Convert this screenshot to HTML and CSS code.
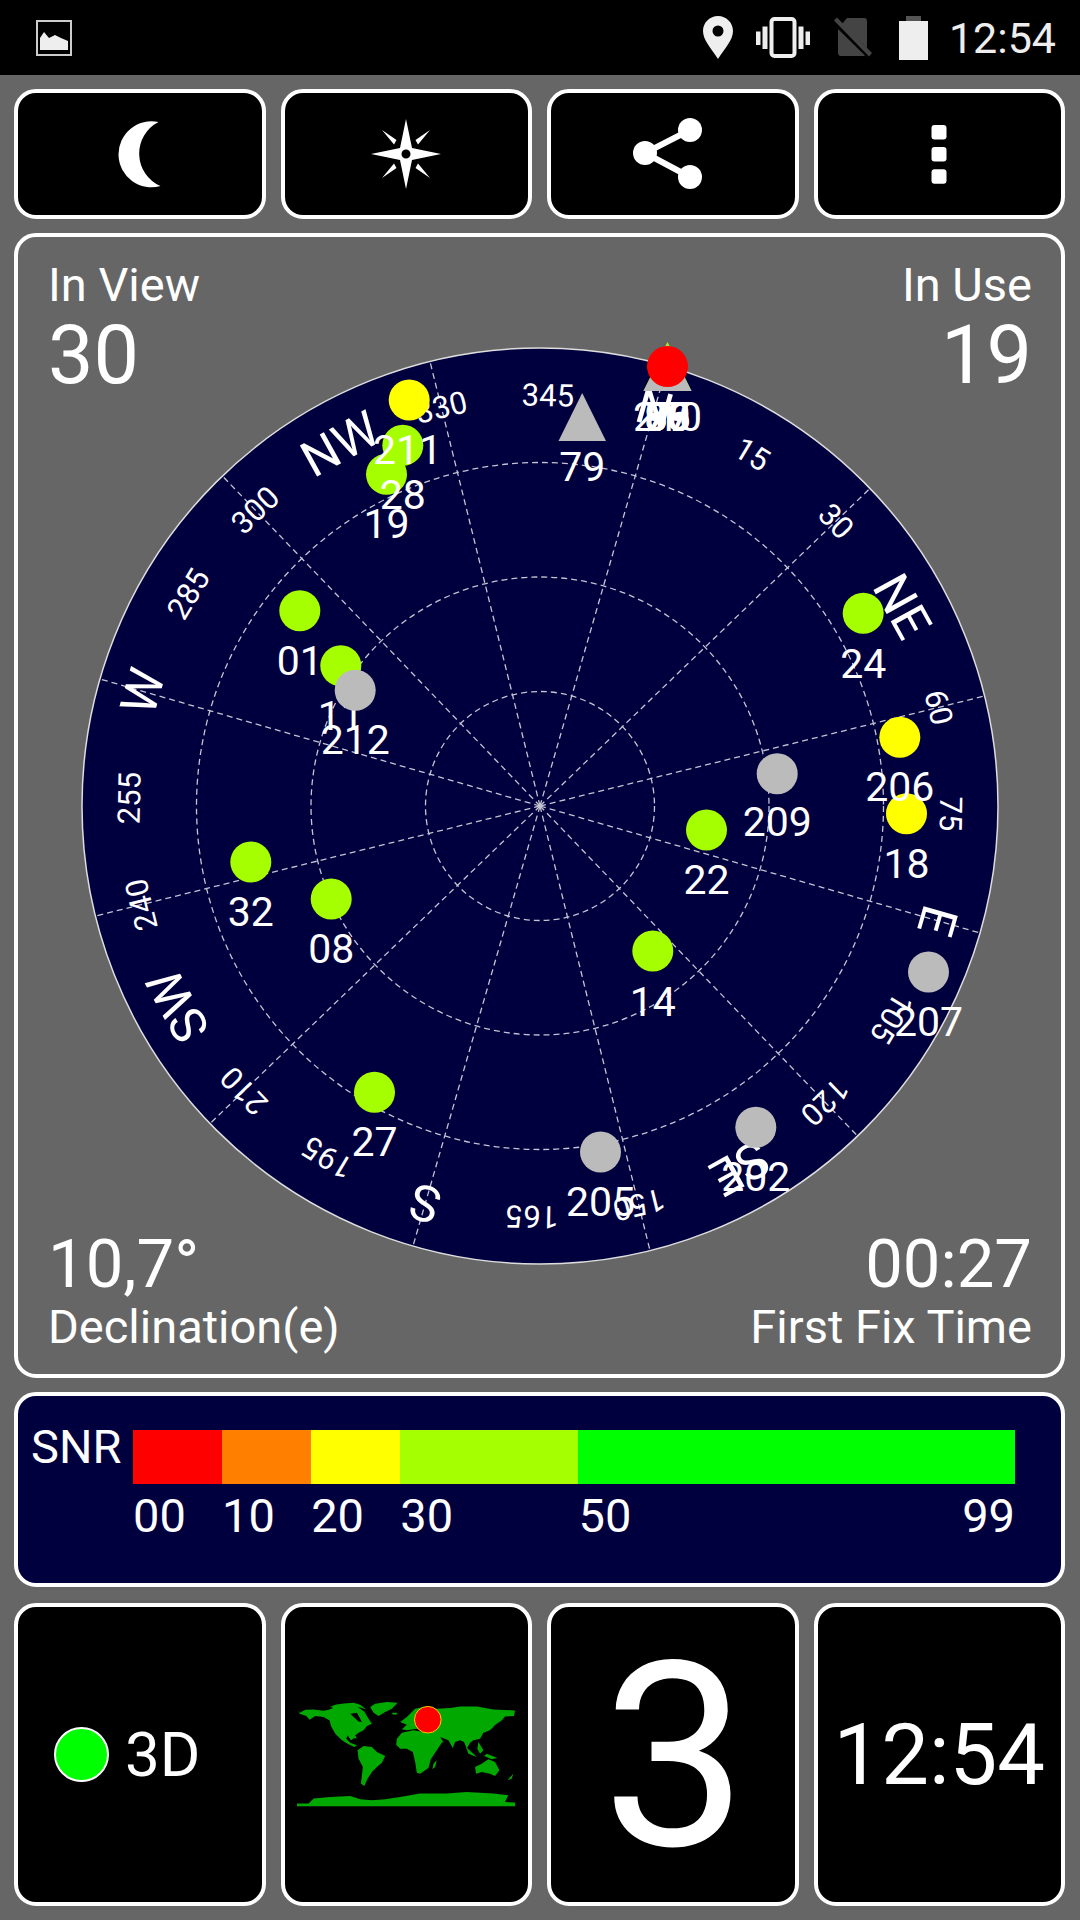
FILE: index.html
```html
<!DOCTYPE html>
<html lang="en">
<head>
  <meta charset="UTF-8" />
  <title>GPS Test</title>
  <meta name="viewport" content="width=device-width, initial-scale=1" />
  <link rel="stylesheet" href="styles.css">
</head>
<body>
  <header class="status-bar">
    <svg class="icon-image" width="36" height="36" viewBox="0 0 36 36">
      <rect x="1" y="1" width="34" height="34" class="outline"/>
      <path class="light" d="M4 30V18l4-6 5 6 6-3 6 3 7 3v9z"/>
    </svg>
    <div class="status-icons">
      <svg width="30" height="43" viewBox="0 0 30 43">
        <path class="light" fill-rule="evenodd" d="M15 0C6.7 0 0 6.7 0 15c0 9 8 17 15 28 7-11 15-19 15-28C30 6.7 23.300 0 15 0zm0 9.500a5.500 5.500 0 1 1 0 11 5.500 5.500 0 0 1 0-11z"/>
      </svg>
      <svg width="54" height="41" viewBox="0 0 54 41">
        <rect class="phone" x="15.500" y="2" width="23" height="37" rx="3"/>
        <path class="light" d="M6.500 9.500h5V32h-5zM0 14.500h4.500V28H0zM42.500 9.500h5V32h-5zM49.500 14.500H54V28h-4.500z"/>
      </svg>
      <svg class="icon-sim" width="39" height="41" viewBox="0 0 39 41">
        <path class="dim" d="M14 1h17a3 3 0 0 1 3 3v27L9 7zM5 12l27 26.500a3 3 0 0 1-1 .5H8a3 3 0 0 1-3-3z"/>
        <path class="dim" d="M1 3.500l3-3 35 35.500-3 3.500z"/>
      </svg>
      <svg class="icon-battery" width="29" height="44" viewBox="0 0 29 44">
        <path class="cap" d="M7 0h15v5H7z"/>
        <path class="light" d="M0 5h29v39H0z"/>
      </svg>
      <span class="status-time">12:54</span>
    </div>
  </header>

  <main class="screen">
    <nav class="button-row tool-row">
      <button class="cell">
        <svg width="80" height="80" viewBox="-40 -40 80 80">
          <path d="M18.500-32A33 33 0 1 0 20.500 32 35.400 35.400 0 0 1 18.500-32z"/>
        </svg>
      </button>
      <button class="cell">
        <svg width="80" height="80" viewBox="-40 -40 80 80">
          <path fill-rule="evenodd" d="M0-35L6-6 35 0 6 6 0 35-6 6-35 0-6-6zM0-4.500a4.500 4.500 0 1 0 0 9 4.500 4.500 0 0 0 0-9z"/>
          <path d="M-24-24L-9.500-14-12-9.500zM24-24L9.500-14 12-9.500zM-24 24L-9.500 14-12 9.500zM24 24L9.500 14 12 9.500z"/>
        </svg>
      </button>
      <button class="cell">
        <svg width="80" height="80" viewBox="-40 -40 80 80">
          <circle cx="17" cy="-24" r="12"/>
          <circle cx="-28" cy="-1" r="12"/>
          <circle cx="17" cy="23" r="12"/>
          <path class="share-line" d="M17-24L-28-1 17 23"/>
        </svg>
      </button>
      <button class="cell">
        <svg width="80" height="80" viewBox="-40 -40 80 80">
          <rect x="-7.500" y="-29" width="15" height="14.500" rx="3"/>
          <rect x="-7.500" y="-7" width="15" height="14.500" rx="3"/>
          <rect x="-7.500" y="15.300" width="15" height="14.500" rx="3"/>
        </svg>
      </button>
    </nav>

    <section class="sky-panel">
      <svg class="sky-plot" width="920" height="920" viewBox="79.5 345 920 920">
        <circle class="sky-disc" cx="539.5" cy="805" r="458"/>
        <g transform="translate(539.5 805)">
          <g class="grid">
            <circle r="114.500"/>
            <circle r="229"/>
            <circle r="343.500"/>
            <path d="M0 0V-458" transform="rotate(16.1)"/>
            <path d="M0 0V-458" transform="rotate(46.1)"/>
            <path d="M0 0V-458" transform="rotate(76.1)"/>
            <path d="M0 0V-458" transform="rotate(106.1)"/>
            <path d="M0 0V-458" transform="rotate(136.1)"/>
            <path d="M0 0V-458" transform="rotate(166.1)"/>
            <path d="M0 0V-458" transform="rotate(196.1)"/>
            <path d="M0 0V-458" transform="rotate(226.1)"/>
            <path d="M0 0V-458" transform="rotate(256.1)"/>
            <path d="M0 0V-458" transform="rotate(286.1)"/>
            <path d="M0 0V-458" transform="rotate(316.1)"/>
            <path d="M0 0V-458" transform="rotate(346.1)"/>
          </g>
          <g class="degrees">
            <text transform="rotate(31.1) translate(0 -411)" dy=".355em">15</text>
            <text transform="rotate(46.1) translate(0 -411)" dy=".355em">30</text>
            <text transform="rotate(76.1) translate(0 -411)" dy=".355em">60</text>
            <text transform="rotate(91.1) translate(0 -411)" dy=".355em">75</text>
            <text transform="rotate(121.1) translate(0 -411)" dy=".355em">105</text>
            <text transform="rotate(136.1) translate(0 -411)" dy=".355em">120</text>
            <text transform="rotate(166.1) translate(0 -411)" dy=".355em">150</text>
            <text transform="rotate(181.1) translate(0 -411)" dy=".355em">165</text>
            <text transform="rotate(211.1) translate(0 -411)" dy=".355em">195</text>
            <text transform="rotate(226.1) translate(0 -411)" dy=".355em">210</text>
            <text transform="rotate(256.1) translate(0 -411)" dy=".355em">240</text>
            <text transform="rotate(271.1) translate(0 -411)" dy=".355em">255</text>
            <text transform="rotate(301.1) translate(0 -411)" dy=".355em">285</text>
            <text transform="rotate(316.1) translate(0 -411)" dy=".355em">300</text>
            <text transform="rotate(346.1) translate(0 -411)" dy=".355em">330</text>
            <text transform="rotate(361.1) translate(0 -411)" dy=".355em">345</text>
          </g>
          <g class="compass">
            <text transform="rotate(16.1) translate(0 -414)" dy=".355em">N</text>
            <text transform="rotate(61.1) translate(0 -414)" dy=".355em">NE</text>
            <text transform="rotate(106.1) translate(0 -414)" dy=".355em">E</text>
            <text transform="rotate(151.1) translate(0 -414)" dy=".355em">SE</text>
            <text transform="rotate(196.1) translate(0 -414)" dy=".355em">S</text>
            <text transform="rotate(241.1) translate(0 -414)" dy=".355em">SW</text>
            <text transform="rotate(286.1) translate(0 -414)" dy=".355em">W</text>
            <text transform="rotate(331.1) translate(0 -414)" dy=".355em">NW</text>
          </g>
        </g>

        <!-- satellites on the horizon, all piled up at north -->
        <polygon class="sat-mid" points="667,341 691,390 643,390"/>
        <polygon class="sat-idle" points="667,343 691,390 643,390"/>
        <circle class="sat-red" cx="667" cy="365.500" r="20.500"/>
        <g class="sat-labels">
          <text x="667" y="430">210</text>
          <text x="667" y="430">69</text>
          <text x="667" y="430">70</text>
          <text x="667" y="430">77</text>
          <text x="667" y="430">78</text>
          <text x="667" y="430">85</text>
          <text x="667" y="430">86</text>
          <text x="667" y="430">87</text>
          <text x="667" y="430">93</text>
          <text x="667" y="430">68</text>
        </g>

        <polygon class="sat-idle" points="581.7,392 605.5,440 558,440"/>
        <text class="sat-label" x="581.7" y="480">79</text>

        <circle class="sat-yellow" cx="408.700" cy="399" r="20.500"/>
        <circle class="sat-mid" cx="402.300" cy="444.300" r="20.500"/>
        <circle class="sat-mid" cx="386" cy="473.300" r="20.500"/>
        <text class="sat-label" x="407" y="463">211</text>
        <text class="sat-label" x="402.300" y="508.300">28</text>
        <text class="sat-label" x="386" y="537">19</text>

        <circle class="sat-mid" cx="299.300" cy="609.700" r="20.500"/>
        <text class="sat-label" x="299.300" y="673.500">01</text>
        <circle class="sat-mid" cx="340.300" cy="664.700" r="20.500"/>
        <text class="sat-label" x="340.300" y="728.700">11</text>
        <circle class="sat-idle" cx="354.700" cy="689.300" r="20.500"/>
        <text class="sat-label" x="354.700" y="753">212</text>

        <circle class="sat-mid" cx="862.700" cy="612.300" r="20.500"/>
        <text class="sat-label" x="862.700" y="676.500">24</text>
        <circle class="sat-yellow" cx="906" cy="812.700" r="20.500"/>
        <text class="sat-label" x="906" y="876.700">18</text>
        <circle class="sat-yellow" cx="899.300" cy="736.300" r="20.500"/>
        <text class="sat-label" x="899.300" y="800">206</text>
        <circle class="sat-idle" cx="776.700" cy="772.700" r="20.500"/>
        <text class="sat-label" x="776.700" y="835">209</text>
        <circle class="sat-mid" cx="706" cy="829" r="20.500"/>
        <text class="sat-label" x="706" y="893">22</text>
        <circle class="sat-mid" cx="652.300" cy="950" r="20.500"/>
        <text class="sat-label" x="652.300" y="1015">14</text>
        <circle class="sat-idle" cx="928" cy="971" r="20.500"/>
        <text class="sat-label" x="928" y="1035">207</text>
        <circle class="sat-idle" cx="755.300" cy="1126.300" r="20.500"/>
        <text class="sat-label" x="755.300" y="1190">202</text>
        <circle class="sat-idle" cx="600" cy="1151" r="20.500"/>
        <text class="sat-label" x="600" y="1215">205</text>

        <circle class="sat-mid" cx="250.300" cy="861" r="20.500"/>
        <text class="sat-label" x="250.300" y="925">32</text>
        <circle class="sat-mid" cx="330.700" cy="898" r="20.500"/>
        <text class="sat-label" x="330.700" y="962">08</text>
        <circle class="sat-mid" cx="374" cy="1091.300" r="20.500"/>
        <text class="sat-label" x="374" y="1155">27</text>
      </svg>

      <div class="readouts">
        <div class="readout-row top">
          <div>
            <div class="readout-label">In View</div>
            <div class="readout-big">30</div>
          </div>
          <div class="right">
            <div class="readout-label">In Use</div>
            <div class="readout-big">19</div>
          </div>
        </div>
        <div class="readout-row bottom">
          <div>
            <div class="readout-value">10,7°</div>
            <div class="readout-label">Declination(e)</div>
          </div>
          <div class="right">
            <div class="readout-value">00:27</div>
            <div class="readout-label">First Fix Time</div>
          </div>
        </div>
      </div>
    </section>

    <section class="snr-panel">
      <div class="snr-label">SNR</div>
      <div class="snr-chart">
        <div class="snr-bar">
          <div class="seg seg-10 red"></div>
          <div class="seg seg-10 orange"></div>
          <div class="seg seg-10 yellow"></div>
          <div class="seg seg-20 lime"></div>
          <div class="seg seg-49 green"></div>
        </div>
        <div class="snr-scale">
          <div class="seg seg-10">00</div>
          <div class="seg seg-10">10</div>
          <div class="seg seg-10">20</div>
          <div class="seg seg-20">30</div>
          <div class="seg seg-49 scale-end"><span>50</span><span>99</span></div>
        </div>
      </div>
    </section>

    <section class="button-row info-row">
      <div class="cell fix-cell">
        <span class="fix-dot"></span>
        <span class="fix-text">3D</span>
      </div>
      <div class="cell">
        <svg class="world" width="218" height="105" viewBox="110 190 655 315">
          <g class="land">
            <polygon points="112,212 118,222 135,213 160,212 190,216 205,213 230,203 258,198 285,200 300,210 312,218 325,240 335,255 320,262 310,275 295,282 285,290 290,300 283,298 272,305 262,290 258,300 270,312 290,320 282,325 262,315 245,305 225,285 212,262 208,245 190,235 165,232 148,243 138,232 118,225"/>
            <polygon points="210,204 225,198 250,194 280,192 300,198 318,212 300,206 275,204 245,208 225,210"/>
            <polygon points="330,205 345,195 380,190 412,192 395,210 375,220 355,232 340,222"/>
            <polygon points="395,222 412,222 408,228 398,227"/>
            <polygon points="292,335 310,322 335,325 350,340 375,352 365,372 350,385 335,400 322,420 312,442 302,435 305,410 308,385 295,360"/>
            <polygon points="410,300 425,282 460,275 490,280 510,285 525,305 545,312 530,335 512,362 505,388 480,405 470,402 465,370 458,340 440,330 420,330 408,318"/>
            <polygon points="520,375 530,365 525,385 517,392"/>
            <polygon points="420,250 440,235 465,210 490,205 530,210 570,208 600,203 650,203 700,212 765,215 762,232 735,233 725,245 700,262 690,275 670,282 660,300 640,305 630,312 620,330 612,310 600,305 585,310 578,328 565,305 540,295 550,310 525,320 512,290 490,275 470,270 440,275 425,272 440,258"/>
            <polygon points="700,240 708,255 695,270 690,268"/>
            <polygon points="618,325 640,345 650,355 625,345"/>
            <polygon points="655,310 670,335 660,345 652,330"/>
            <polygon points="680,345 712,358 695,362 672,352"/>
            <polygon points="645,385 665,375 685,362 705,370 718,395 705,412 690,405 665,400 648,405"/>
            <polygon points="742,425 760,405 755,420"/>
            <polygon points="110,495 145,495 160,480 210,475 270,472 300,482 335,485 375,482 420,475 480,465 560,465 620,460 700,465 745,470 735,490 765,492 765,503 110,503"/>
          </g>
          <polygon class="bay" points="270,225 290,222 300,240 305,250 295,248 280,235"/>
          <circle class="marker" cx="503" cy="243" r="40"/>
        </svg>
      </div>
      <div class="cell big-digit">3</div>
      <div class="cell clock">12:54</div>
    </section>
  </main>
</body>
</html>
```

FILE: styles.css
```css
* {
  box-sizing: border-box;
}
body {
  margin: 0;
  width: 1080px;
  height: 1920px;
  overflow: hidden;
  background: #666;
  color: #fff;
  font-family: Roboto, "Liberation Sans", sans-serif;
}

/* status bar */
.status-bar {
  height: 75px;
  background: #000;
  display: flex;
  align-items: center;
  justify-content: space-between;
  padding: 0 24px 0 36px;
}
.icon-image {
  margin-top: 1px;
}
.outline {
  fill: none;
  stroke: #ccc;
  stroke-width: 2;
}
.status-icons {
  display: flex;
  align-items: center;
  gap: 23px;
}
.icon-battery {
  margin-left: 4px;
}
.light {
  fill: #eee;
}
.dim {
  fill: #444;
}
.cap {
  fill: #555;
}
.phone {
  fill: none;
  stroke: #eee;
  stroke-width: 4;
}
.status-time {
  margin-left: -2px;
  font-size: 43px;
  color: #eee;
}

/* layout */
.screen {
  display: flex;
  flex-direction: column;
  gap: 14px;
  padding: 14px 15px 0 14px;
}
.button-row {
  display: grid;
  grid-template-columns: repeat(4, 1fr);
  gap: 15px;
}
.tool-row {
  height: 130px;
}
.info-row {
  height: 303px;
  margin-top: 2px;
}
.cell {
  display: flex;
  align-items: center;
  justify-content: center;
  padding: 0;
  background: #000;
  border: 4px solid #fff;
  border-radius: 22px;
  color: #fff;
  font-family: inherit;
}
.cell svg {
  fill: #fff;
}
.share-line {
  fill: none;
  stroke: #fff;
  stroke-width: 6;
}

/* sky view */
.sky-panel {
  height: 1145px;
  display: grid;
  border: 4px solid #fff;
  border-radius: 22px;
}
.sky-plot,
.readouts {
  grid-area: 1 / 1;
}
.sky-plot {
  place-self: center;
  overflow: visible;
}
.sky-disc {
  fill: #00003f;
  stroke: #ddd;
  stroke-width: 1.5;
}
.grid circle,
.grid path {
  fill: none;
  stroke: #c4c4d2;
  stroke-width: 1.3;
  stroke-dasharray: 6 4;
}
.degrees text {
  fill: #fff;
  font-size: 31px;
  text-anchor: middle;
}
.compass text {
  fill: #fff;
  font-size: 50px;
  text-anchor: middle;
}
.sat-label,
.sat-labels text {
  fill: #fff;
  font-size: 41px;
  text-anchor: middle;
}
.sat-red {
  fill: #f00;
}
.sat-yellow {
  fill: #ff0;
}
.sat-mid {
  fill: #a6ff00;
}
.sat-idle {
  fill: #bbb;
}
.readouts {
  display: flex;
  flex-direction: column;
  justify-content: space-between;
  padding: 23px 29px 22px 30px;
  pointer-events: none;
}
.readout-row {
  display: flex;
  justify-content: space-between;
}
.right {
  text-align: right;
}
.readout-label {
  font-size: 47px;
  line-height: 50px;
}
.readout-big {
  font-size: 81px;
  line-height: 92px;
}
.readout-value {
  font-size: 67px;
  line-height: 76px;
}

/* snr legend */
.snr-panel {
  height: 195px;
  display: flex;
  padding: 24px 0 0 13px;
  background: #00003f;
  border: 4px solid #fff;
  border-radius: 22px;
}
.snr-label {
  width: 102px;
  font-size: 47px;
  line-height: 54px;
}
.snr-chart {
  width: 882px;
  margin-top: 10px;
}
.snr-bar {
  height: 54px;
  display: flex;
}
.snr-scale {
  display: flex;
  margin-top: 5px;
  font-size: 47px;
  line-height: 54px;
}
.seg-10 {
  flex: 10;
}
.seg-20 {
  flex: 20;
}
.seg-49 {
  flex: 49;
}
.red {
  background: #f00;
}
.orange {
  background: #ff8000;
}
.yellow {
  background: #ff0;
}
.lime {
  background: #a6ff00;
}
.green {
  background: #0f0;
}
.scale-end {
  display: flex;
  justify-content: space-between;
}

/* bottom row */
.fix-cell {
  justify-content: flex-start;
  padding-left: 36px;
  gap: 16px;
}
.fix-dot {
  width: 55px;
  height: 55px;
  background: #0f0;
  border: 2px solid #fff;
  border-radius: 50%;
}
.fix-text {
  font-size: 62px;
}
.land polygon {
  fill: #00a800;
}
.cell .bay {
  fill: #000;
}
.cell .marker {
  fill: #f00;
  stroke: #fc0;
  stroke-width: 3;
}
.big-digit {
  padding: 4px 0 0 4px;
  font-size: 258px;
  line-height: 1;
}
.clock {
  font-size: 85px;
}
```
